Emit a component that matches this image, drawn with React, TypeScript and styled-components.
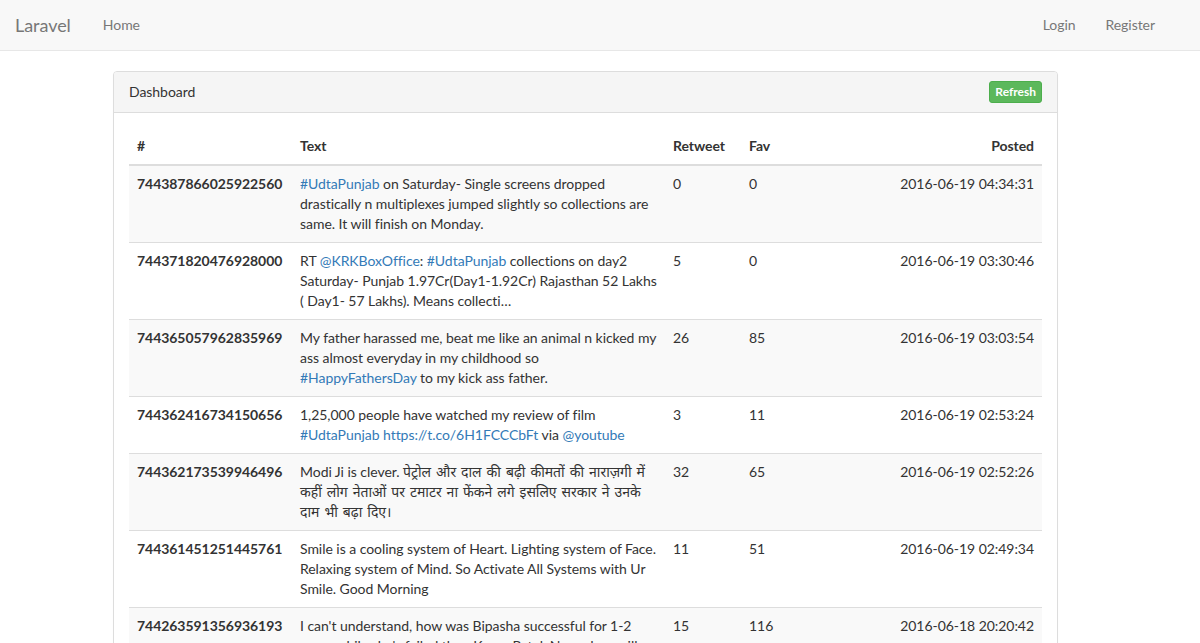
import React from "react";
import styled, { createGlobalStyle } from "styled-components";

const Global = createGlobalStyle`
  html, body { margin: 0; padding: 0; }
  body {
    font-family: Lato, "Noto Sans", "Noto Sans CJK SC", sans-serif;
    font-size: 14px;
    line-height: 20px;
    color: #333;
    background: #fff;
    overflow: hidden;
    letter-spacing: -0.045px;
  }
  * { box-sizing: border-box; }
`;

const Navbar = styled.nav`
  height: 51px;
  background: #f8f8f8;
  border-bottom: 1px solid #e7e7e7;
  display: flex;
  align-items: center;
  padding: 0 30px 0 0;
`;

const Brand = styled.a`
  font-size: 18px;
  color: #777;
  padding: 15px 17px 15px 15px;
  text-decoration: none;
  line-height: 20px;
`;

const NavLinks = styled.div<{ $right?: boolean }>`
  display: flex;
  margin-left: ${(p) => (p.$right ? "auto" : "0")};
`;

const NavLink = styled.a`
  color: #777;
  padding: 15px;
  text-decoration: none;
  line-height: 20px;
`;

const Main = styled.main`
  padding: 20px 0 0 113px;
`;

const Panel = styled.div`
  width: 945px;
  border: 1px solid #ddd;
  border-radius: 4px;
  box-shadow: 0 1px 1px rgba(0, 0, 0, 0.05);
  background: #fff;
`;

const PanelHeading = styled.div`
  display: flex;
  align-items: center;
  justify-content: space-between;
  padding: 10px 15px;
  height: 41px;
  background: #f5f5f5;
  border-bottom: 1px solid #ddd;
  border-radius: 3px 3px 0 0;
  color: #333;
`;

const Button = styled.button`
  font-family: Lato, sans-serif;
  font-size: 12px;
  font-weight: 700;
  line-height: 1.5;
  padding: 1px 5px;
  color: #fff;
  background: #5cb85c;
  border: 1px solid #4cae4c;
  border-radius: 3px;
`;

const PanelBody = styled.div`
  padding: 15px;
`;

const Table = styled.table`
  width: 100%;
  border-collapse: collapse;
  border-spacing: 0;
  table-layout: fixed;
`;

const Th = styled.th<{ $align?: string }>`
  text-align: ${(p) => p.$align || "left"};
  font-weight: 700;
  padding: 8px;
  border-bottom: 2px solid #ddd;
  vertical-align: bottom;
  line-height: 20px;
`;

const Tr = styled.tr<{ $odd?: boolean }>`
  background: ${(p) => (p.$odd ? "#f9f9f9" : "transparent")};
`;

const Td = styled.td<{ $align?: string; $bold?: boolean }>`
  text-align: ${(p) => p.$align || "left"};
  font-weight: ${(p) => (p.$bold ? 700 : 400)};
  padding: 8px;
  border-top: 1px solid #ddd;
  vertical-align: top;
  line-height: 20px;
`;

const Link = styled.a`
  color: #337ab7;
  text-decoration: none;
`;

const Hindi = styled.span`
  word-spacing: 1.5px;
`;

type Row = { id: string; text: React.ReactNode; rt: number; fav: number; posted: string };

const rows: Row[] = [
  {
    id: "744387866025922560",
    text: (
      <>
        <Link>#UdtaPunjab</Link> on Saturday- Single screens dropped drastically n multiplexes jumped slightly so collections are same. It will finish on Monday.
      </>
    ),
    rt: 0,
    fav: 0,
    posted: "2016-06-19 04:34:31",
  },
  {
    id: "744371820476928000",
    text: (
      <>
        RT <Link>@KRKBoxOffice</Link>: <Link>#UdtaPunjab</Link> collections on day2 Saturday- Punjab 1.97Cr(Day1-1.92Cr) Rajasthan 52 Lakhs ( Day1- 57 Lakhs). Means collecti…
      </>
    ),
    rt: 5,
    fav: 0,
    posted: "2016-06-19 03:30:46",
  },
  {
    id: "744365057962835969",
    text: (
      <>
        My father harassed me, beat me like an animal n kicked my ass almost everyday in my childhood so <Link>#HappyFathersDay</Link> to my kick ass father.
      </>
    ),
    rt: 26,
    fav: 85,
    posted: "2016-06-19 03:03:54",
  },
  {
    id: "744362416734150656",
    text: (
      <>
        1,25,000 people have watched my review of film <Link>#UdtaPunjab</Link> <Link>https://t.co/6H1FCCCbFt</Link> via <Link>@youtube</Link>
      </>
    ),
    rt: 3,
    fav: 11,
    posted: "2016-06-19 02:53:24",
  },
  {
    id: "744362173539946496",
    text: (
      <>
        Modi Ji is clever. <Hindi>पेट्रोल और दाल की बढ़ी कीमतों की नाराज़गी में कहीं लोग नेताओं पर टमाटर ना फेंकने लगे इसलिए सरकार ने उनके दाम भी बढ़ा दिए।</Hindi>
      </>
    ),
    rt: 32,
    fav: 65,
    posted: "2016-06-19 02:52:26",
  },
  {
    id: "744361451251445761",
    text: <>Smile is a cooling system of Heart. Lighting system of Face. Relaxing system of Mind. So Activate All Systems with Ur Smile. Good Morning</>,
    rt: 11,
    fav: 51,
    posted: "2016-06-19 02:49:34",
  },
  {
    id: "744263591356936193",
    text: <>I can't understand, how was Bipasha successful for 1-2 years while she's failed then Karan Patel. Nowadays will she get more films?</>,
    rt: 15,
    fav: 116,
    posted: "2016-06-18 20:20:42",
  },
];

export default function App() {
  return (
    <>
      <Global />
      <Navbar>
        <Brand>Laravel</Brand>
        <NavLinks>
          <NavLink>Home</NavLink>
        </NavLinks>
        <NavLinks $right>
          <NavLink>Login</NavLink>
          <NavLink>Register</NavLink>
        </NavLinks>
      </Navbar>
      <Main>
        <Panel>
          <PanelHeading>
            <span>Dashboard</span>
            <Button>Refresh</Button>
          </PanelHeading>
          <PanelBody>
            <Table>
              <colgroup>
                <col style={{ width: 163 }} />
                <col style={{ width: 373 }} />
                <col style={{ width: 76 }} />
                <col />
                <col style={{ width: 160 }} />
              </colgroup>
              <thead>
                <tr>
                  <Th>#</Th>
                  <Th>Text</Th>
                  <Th>Retweet</Th>
                  <Th>Fav</Th>
                  <Th $align="right">Posted</Th>
                </tr>
              </thead>
              <tbody>
                {rows.map((r, i) => (
                  <Tr key={r.id} $odd={i % 2 === 0}>
                    <Td $bold>{r.id}</Td>
                    <Td>{r.text}</Td>
                    <Td>{r.rt}</Td>
                    <Td>{r.fav}</Td>
                    <Td $align="right">{r.posted}</Td>
                  </Tr>
                ))}
              </tbody>
            </Table>
          </PanelBody>
        </Panel>
      </Main>
    </>
  );
}
